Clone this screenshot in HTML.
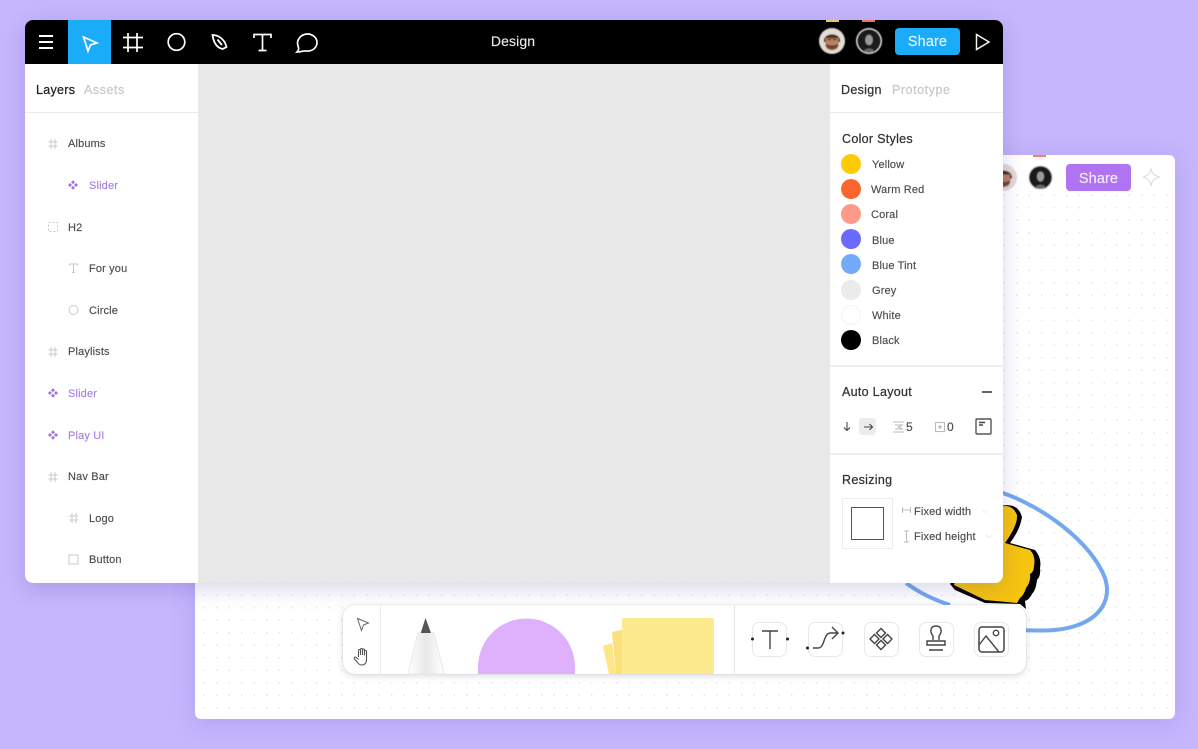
<!DOCTYPE html>
<html><head><meta charset="utf-8"><style>
*{box-sizing:border-box}
html,body{margin:0;padding:0}
body{width:1198px;height:749px;overflow:hidden;position:relative;background:#c5b6fd;font-family:"Liberation Sans",sans-serif}
.a{position:absolute}
.t{position:absolute;white-space:nowrap;line-height:14px;font-size:11px;color:#4c4c4c;letter-spacing:.15px;-webkit-text-stroke:.15px currentColor}
.h{font-size:12.5px;color:#333;letter-spacing:.3px;line-height:16px;-webkit-text-stroke:.25px currentColor}
.p{color:#a97fe6}
.g{color:#c9c9c9;letter-spacing:.55px}
.c{position:absolute;left:841px;width:20px;height:20px;border-radius:50%}
.tool{position:absolute;top:622px;width:35px;height:35px;border:1px solid #e8e8e8;border-radius:7px;background:#fff}
svg{position:absolute;overflow:visible}
.av{filter:blur(.5px)}
</style></head><body>

<div class="a" style="left:195px;top:155px;width:980px;height:564px;background-color:#fff;border-radius:6px;box-shadow:0 4px 24px rgba(90,70,180,.18);background-image:radial-gradient(circle,#e6e6ec .7px,transparent 1px);background-size:12.5px 12.5px;background-position:3px 9px"></div>
<div class="a" style="left:1003px;top:156px;width:172px;height:36px;background:#fff;border-radius:0 6px 0 0"></div>
<div class="a" style="left:1033px;top:155px;width:13px;height:2px;background:#ef8060"></div>
<svg class="av" style="left:990px;top:164px" width="27" height="27" viewBox="0 0 26 26"><circle cx="13" cy="13" r="13" fill="#e0dcd6"/><path d="M5 14C4 4 22 4 21 14Z" fill="#4a3020"/><path d="M6.500 10H19.500V17C19.500 24 6.500 24 6.500 17Z" fill="#b98060"/><path d="M7 16C10 18 16 18 19 16 19 23 7 23 7 16Z" fill="#6a452e"/></svg>
<svg class="av" style="left:1028px;top:165px" width="25" height="25" viewBox="0 0 26 26"><circle cx="13" cy="13" r="13" fill="#e2e2e2"/><circle cx="13" cy="13" r="11.500" fill="#1a1a1a"/><ellipse cx="13" cy="12" rx="4" ry="5.500" fill="#999"/><path d="M7 24C9 19 17 19 19 24Z" fill="#666"/></svg>
<div class="a" style="left:1066px;top:164px;width:65px;height:27px;border-radius:4px;background:#b074f2"></div>
<div class="t" style="left:1066px;top:172px;width:65px;text-align:center;color:#f3eaff;font-size:14.5px;letter-spacing:.1px">Share</div>
<svg style="left:1142px;top:167px" width="20" height="20" viewBox="0 0 20 20" fill="none" stroke="#dcdcdc" stroke-width="1.100"><path d="M9 1.500C9.600 6 11.500 8.600 18 10 12 11.300 10 13.800 9 19 8 13.800 6 11.300 1 10 6.500 8.600 8.400 6 9 1.500Z"/></svg>

<svg style="left:880px;top:480px" width="240" height="160" viewBox="880 480 240 160" fill="none"><path d="M1000 492C1040 505 1090 540 1105 578 1112 600 1100 618 1075 626 1060 631 1045 631 1020 630M906 583C920 593 932 599 950 605" stroke="#74a8ee" stroke-width="4"/></svg>
<svg style="left:940px;top:500px" width="110" height="115" viewBox="940 500 110 115"><path d="M1000 506Q1018 502 1022 517 1020 530 1010 543L1035 550Q1042 558 1040 568 1041 576 1037 580 1036 590 1032 594 1029 600 1025 601L1026 609 1020 604 985 603 955 590 950 584Z" fill="#000"/><path d="M1000 507Q1012 503 1017 515 1018 525 1005 543L1030 550Q1036 556 1034 566 1034 572 1030 574 1031 582 1026 588 1024 595 1020 598L1017 603 985 600 954 585 960 560Z" fill="#f5c40f"/></svg>

<div class="a" style="left:343px;top:605px;width:683px;height:69px;background:#fff;border-radius:12px;box-shadow:0 2px 7px rgba(40,40,70,.16),0 0 1px rgba(40,40,70,.25)"></div>
<div class="a" style="left:380px;top:605px;width:1px;height:69px;background:#ececec"></div>
<div class="a" style="left:734px;top:605px;width:1px;height:69px;background:#e6e6e6"></div>
<svg style="left:356px;top:617px" width="14" height="15" fill="none" stroke="#666" stroke-width="1"><path d="M1.500 1.500 12.500 6 7.500 8 5.500 13.500Z"/></svg>
<svg style="left:352px;top:646px" width="20" height="20" viewBox="0 0 20 20" fill="none" stroke="#555" stroke-width="1.100"><path d="M6.500 11V4.500a1 1 0 0 1 2 0V9M8.500 3.500a1 1 0 0 1 2 0V9M10.500 4a1 1 0 0 1 2 0V9.500M12.500 5.500a1 1 0 0 1 2 0V14c0 3-2 5-4.500 5S6.500 18 5.500 16.500L2.500 13c-1-1.300.8-2.500 1.800-1.500L6.500 13.500"/></svg>
<svg style="left:400px;top:615px" width="50" height="60" viewBox="400 615 50 60"><defs><linearGradient id="pg" x1="0" x2="1" y1="0" y2="0"><stop offset="0" stop-color="#fff"/><stop offset=".5" stop-color="#e8e8e8"/><stop offset="1" stop-color="#fff"/></linearGradient></defs><path d="M418 633 408 674H444L434 633Z" fill="url(#pg)" stroke="#e8e8e8"/><path d="M425.500 618 420.700 633H431Z" fill="#555"/></svg>
<svg style="left:470px;top:610px" width="110" height="65" viewBox="470 610 110 65"><path d="M478 674V667A48.500 48.500 0 0 1 575 667V674Z" fill="#dfb0fc"/></svg>
<svg style="left:600px;top:615px" width="120" height="60" viewBox="600 615 120 60"><path d="M603 646 612 643 616 674H609Z" fill="#fde685"/><path d="M612 632 622 630V674H616Z" fill="#fbe07c"/><rect x="622" y="618" width="92" height="56" rx="1" fill="#fdea8e"/></svg>

<div class="tool" style="left:752px"></div><div class="tool" style="left:808px"></div><div class="tool" style="left:864px"></div><div class="tool" style="left:919px"></div><div class="tool" style="left:974px"></div>
<svg style="left:745px;top:620px" width="290" height="40" viewBox="745 620 290 40" fill="none" stroke="#444" stroke-width="1.400">
<path d="M762 631H778M770 631V649"/><circle cx="752.500" cy="639" r="1.500" fill="#222" stroke="none"/><circle cx="787.500" cy="639" r="1.500" fill="#222" stroke="none"/>
<path d="M813 648H818C825 648 823 634 830 633H838M832 627 838 633 832 639"/><circle cx="807.500" cy="648" r="1.500" fill="#222" stroke="none"/><circle cx="843" cy="633" r="1.500" fill="#222" stroke="none"/>
<path d="M881 628.500 885.500 633 881 637.500 876.500 633ZM881 640.500 885.500 645 881 649.500 876.500 645ZM874.500 634.500 879 639 874.500 643.500 870 639ZM887.500 634.500 892 639 887.500 643.500 883 639Z"/>
<path d="M933 640V636C929 631 931 626 936 626 941 626 943 631 939 636V640M927 645V641H945V645ZM929 650H943"/>
<rect x="979" y="627" width="25" height="25" rx="3" stroke-width="1.500"/><circle cx="996" cy="633" r="2.700"/><path d="M979 645 986 636 999 652"/>
</svg>

<div class="a" style="left:25px;top:20px;width:978px;height:563px;background:#fff;border-radius:8px;box-shadow:0 6px 22px rgba(70,50,150,.2);overflow:hidden">
<div class="a" style="left:0;top:0;width:978px;height:43.500px;background:#000"></div>
<div class="a" style="left:43px;top:0;width:43px;height:43.500px;background:#1bacf9"></div>
<div class="a" style="left:173px;top:44px;width:632px;height:519px;background:#e8e8e8"></div>
<div class="a" style="left:0;top:92px;width:173px;height:1px;background:#eaeaea"></div>
<div class="a" style="left:805px;top:92px;width:173px;height:1px;background:#eaeaea"></div>
<div class="a" style="left:805px;top:345px;width:173px;height:2px;background:#eeeeee"></div>
<div class="a" style="left:805px;top:433px;width:173px;height:2px;background:#eeeeee"></div>
</div>

<svg style="left:25px;top:20px" width="300" height="44" viewBox="25 20 300 44" fill="none" stroke="#fff" stroke-width="1.700">
<path d="M39 36H53M39 42H53M39 48H53" stroke-width="2"/>
<path d="M83.500 37 97 43 90.500 45 88 51Z" stroke-width="1.700"/>
<path d="M128 33V52M137 33V52M123 37.500H143M123 47.500H143"/>
<circle cx="176.500" cy="42" r="8.300"/>
<path d="M212.500 35C219 35 225 40 226.500 47L222.500 49C216 47.500 213.500 42 212.500 35ZM217.500 39.500 222 45" stroke-width="1.800"/>
<path d="M254 38V34.500H271V38M262.500 34.500V50M258.500 50.500H266.500"/>
<path d="M297 52C299 50 299 48.500 298 46 296 40 301 34 307.500 34 313 34 317 38 317 42.500 317 48 312 51.500 306.500 51 303 50.500 301 52 297 52Z"/>
</svg>
<div class="t" style="left:463px;top:34px;width:100px;text-align:center;color:#e8e8e8;font-size:14px;letter-spacing:.1px">Design</div>

<div class="a" style="left:826px;top:20px;width:13px;height:2px;background:#e9c65f"></div>
<div class="a" style="left:862px;top:20px;width:13px;height:2px;background:#e07a5d"></div>
<svg class="av" style="left:819px;top:28px" width="26" height="26" viewBox="0 0 26 26"><circle cx="13" cy="13" r="13" fill="#e0dcd6"/><path d="M5 14C4 4 22 4 21 14Z" fill="#4a3020"/><path d="M6.500 10H19.500V17C19.500 24 6.500 24 6.500 17Z" fill="#b98060"/><path d="M7 16C10 18 16 18 19 16 19 23 7 23 7 16Z" fill="#6a452e"/><path d="M9 11.500H12M14 11.500H17" stroke="#3a2418"/></svg>
<svg class="av" style="left:856px;top:28px" width="26" height="26" viewBox="0 0 26 26"><circle cx="13" cy="13" r="13" fill="#e2e2e2"/><circle cx="13" cy="13" r="11.500" fill="#1a1a1a"/><ellipse cx="13" cy="12" rx="4" ry="5.500" fill="#999"/><path d="M7 24C9 19 17 19 19 24Z" fill="#666"/></svg>
<div class="a" style="left:895px;top:28px;width:65px;height:27px;border-radius:4px;background:#1bacf9"></div>
<div class="t" style="left:895px;top:35px;width:65px;text-align:center;color:#e2f4ff;font-size:14.500px;letter-spacing:.1px">Share</div>
<svg style="left:974px;top:32px" width="18" height="20" fill="none" stroke="#f2f2f2" stroke-width="1.500"><path d="M2.500 2.500V17.500L15 10Z"/></svg>

<div class="t h" style="left:36px;top:82px;color:#222">Layers</div>
<div class="t h g" style="left:84px;top:82px">Assets</div>
<div class="t h" style="left:841px;top:82px">Design</div>
<div class="t h g" style="left:892px;top:82px">Prototype</div>

<div class="t" style="left:68px;top:137px">Albums</div>
<div class="t p" style="left:89px;top:179px">Slider</div>
<div class="t" style="left:68px;top:221px">H2</div>
<div class="t" style="left:89px;top:262px">For you</div>
<div class="t" style="left:89px;top:304px">Circle</div>
<div class="t" style="left:68px;top:345px">Playlists</div>
<div class="t p" style="left:68px;top:387px">Slider</div>
<div class="t p" style="left:68px;top:429px">Play UI</div>
<div class="t" style="left:68px;top:470px">Nav Bar</div>
<div class="t" style="left:89px;top:512px">Logo</div>
<div class="t" style="left:89px;top:553px">Button</div>

<svg style="left:40px;top:130px" width="60" height="440" viewBox="40 130 60 440" fill="none" stroke="#c8c8c8" stroke-width="1">
<path d="M51 139V149M55 139V149M48.500 142H57.500M48.500 146H57.500"/>
<path d="M51 347V357M55 347V357M48.500 350H57.500M48.500 354H57.500"/>
<path d="M51 472V482M55 472V482M48.500 475H57.500M48.500 479H57.500"/>
<path d="M72 513V523M76 513V523M69 516H78M69 520H78"/>
<rect x="48.500" y="222.500" width="9" height="9" stroke-dasharray="2 2"/>
<path d="M69.500 265.500V264H77.500V265.500M73.500 264V272.500M72 272.500H75"/>
<circle cx="73.500" cy="310" r="4.500"/>
<rect x="69" y="555" width="9" height="9"/>
<g fill="#a46fe0" stroke="none" transform="translate(0,-1.200)">
<path d="M73 181.500l2 2-2 2-2-2zM73 187l2 2-2 2-2-2zM70 184.200l2 2-2 2-2-2zM76 184.200l2 2-2 2-2-2z"/>
<path d="M53 389.500l2 2-2 2-2-2zM53 395l2 2-2 2-2-2zM50 392.200l2 2-2 2-2-2zM56 392.200l2 2-2 2-2-2z"/>
<path d="M53 431.500l2 2-2 2-2-2zM53 437l2 2-2 2-2-2zM50 434.200l2 2-2 2-2-2zM56 434.200l2 2-2 2-2-2z"/>
</g></svg>

<div class="t h" style="left:842px;top:131px">Color Styles</div>
<div class="c" style="top:154px;background:#ffcb05"></div>
<div class="c" style="top:179px;background:#fc6430"></div>
<div class="c" style="top:204px;background:#ff9a8a"></div>
<div class="c" style="top:229px;background:#6a6afc"></div>
<div class="c" style="top:254px;background:#74abf8"></div>
<div class="c" style="top:280px;background:#ebebeb"></div>
<div class="c" style="top:305px;background:#fff;border:1px solid #f4f4f4"></div>
<div class="c" style="top:330px;background:#000"></div>
<div class="t" style="left:872px;top:158px">Yellow</div>
<div class="t" style="left:871px;top:183px">Warm Red</div>
<div class="t" style="left:871px;top:208px">Coral</div>
<div class="t" style="left:872px;top:234px">Blue</div>
<div class="t" style="left:872px;top:259px">Blue Tint</div>
<div class="t" style="left:872px;top:284px">Grey</div>
<div class="t" style="left:872px;top:309px">White</div>
<div class="t" style="left:872px;top:334px">Black</div>

<div class="t h" style="left:842px;top:384px">Auto Layout</div>
<div class="a" style="left:982px;top:391px;width:10px;height:1.500px;background:#666"></div>
<div class="a" style="left:859px;top:418px;width:17px;height:17px;border-radius:3px;background:#ececec"></div>
<svg style="left:840px;top:415px" width="156" height="24" viewBox="840 415 156 24" fill="none" stroke="#444" stroke-width="1.100">
<path d="M847 422V430M844 427.500 847 430.500 850 427.500M864 427H872M869.500 424 872.500 427 869.500 430"/>
<path d="M893 422H904M893 432H904M895 425H902L898.500 427 902 429H895" stroke="#bbb"/>
<rect x="935.500" y="422.500" width="9" height="9" stroke="#bbb"/><rect x="938.500" y="425.500" width="3" height="3" fill="#bbb" stroke="none"/>
<rect x="976" y="419" width="15" height="15" rx="1" stroke="#555" stroke-width="1.400"/><path d="M979 422.500H985M979 425H983" stroke-width="1.400"/>
</svg>
<div class="t" style="left:906px;top:420px;font-size:12px">5</div>
<div class="t" style="left:947px;top:420px;font-size:12px">0</div>

<div class="t h" style="left:842px;top:472px">Resizing</div>
<div class="a" style="left:842px;top:498px;width:51px;height:51px;border:1px solid #ececec"></div>
<div class="a" style="left:851px;top:507px;width:33px;height:33px;border:1px solid #555"></div>
<svg style="left:900px;top:503px" width="96" height="42" viewBox="900 503 96 42" fill="none" stroke="#bbb" stroke-width="1">
<path d="M902.500 507V513M910.500 507V513M902.500 510H910.500M904 531H909M904 542H909M906.500 531V542"/>
<path d="M982 510 985 512.500 988 510M986 535 989 537.500 992 535" stroke="#eee"/></svg>
<div class="t" style="left:914px;top:505px">Fixed width</div>
<div class="t" style="left:914px;top:530px">Fixed height</div>
</body></html>
